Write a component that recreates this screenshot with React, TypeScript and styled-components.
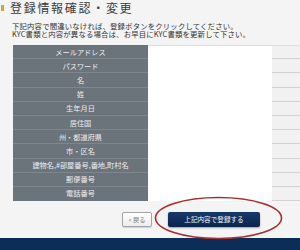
import React from 'react'
import styled, { createGlobalStyle } from 'styled-components'

const Global = createGlobalStyle`
  html, body {
    margin: 0;
    padding: 0;
    background: #f4f4f4;
  }
  body {
    font-family: "Noto Sans CJK JP", "Liberation Sans", sans-serif;
    overflow: hidden;
  }
`

const Page = styled.div`
  width: 300px;
  height: 250px;
  display: flex;
  flex-direction: column;
  background: #f4f4f4;
  overflow: hidden;
`

const Header = styled.div`
  display: flex;
  align-items: center;
  gap: 6px;
  padding: 1px 0 0 1px;
  height: 14px;
`

const Bullet = styled.span`
  width: 3px;
  height: 6px;
  background: #c9a833;
`

const Title = styled.h1`
  margin: 0;
  font-size: 12px;
  line-height: 14px;
  letter-spacing: 1.7px;
  font-weight: 400;
  color: #3c3c3c;
  white-space: nowrap;
`

const Notes = styled.div`
  margin-top: 7px;
  padding-left: 12px;
  font-size: 7.4px;
  line-height: 8.2px;
  letter-spacing: 0.15px;
  color: #333;
  white-space: nowrap;
`

const Table = styled.div`
  margin-top: 6.6px;
  margin-left: 13px;
  display: flex;
  flex-direction: column;
`

const Row = styled.div`
  display: grid;
  grid-template-columns: 135px 124px 1fr;
  height: 14.2px;
`

const Label = styled.div<{ $last?: boolean }>`
  background: #6b737b;
  color: #eceef0;
  font-size: 7.2px;
  display: flex;
  align-items: center;
  justify-content: center;
  border-bottom: 1px solid ${p => (p.$last ? '#6b737b' : '#7f878e')};
  box-sizing: border-box;
  white-space: nowrap;
`

const Value = styled.div<{ $first?: boolean }>`
  background: #ffffff;
  box-sizing: border-box;
  border-top: ${p => (p.$first ? '1px solid #dcdcdc' : 'none')};
`

const Extra = styled.div<{ $first?: boolean }>`
  background: #f1f1f1;
  border-top: ${p => (p.$first ? '1px solid #dcdcdc' : 'none')};
  border-bottom: 1px solid #d2d2d2;
  box-sizing: border-box;
`

const Actions = styled.div`
  position: relative;
  display: flex;
  align-items: center;
  gap: 16px;
  margin-top: 10.8px;
  padding-left: 122px;
  height: 15px;
`

const BackButton = styled.button`
  width: 30px;
  height: 15px;
  padding: 0;
  border: 1px solid #a3a3a3;
  border-radius: 2px;
  background: linear-gradient(#ffffff, #ececec);
  color: #777;
  font-family: inherit;
  font-size: 6.2px;
  box-shadow: 0 1px 1px rgba(0, 0, 0, 0.15);
`

const SubmitButton = styled.button`
  width: 92px;
  height: 15px;
  padding: 0;
  border: none;
  border-radius: 2px;
  background: linear-gradient(#17396a, #0b264d);
  color: #f2f4f8;
  font-family: inherit;
  font-size: 6.6px;
  box-shadow: 0 1px 2px rgba(0, 0, 0, 0.35);
`

const Circle = styled.svg`
  position: absolute;
  left: 154px;
  top: -16px;
  width: 129px;
  height: 44px;
  overflow: visible;
  pointer-events: none;
`

const Footer = styled.div`
  margin-top: auto;
  height: 12px;
  background: #0c2d58;
`

const labels = [
  'メールアドレス',
  'パスワード',
  '名',
  '姓',
  '生年月日',
  '居住国',
  '州・都道府県',
  '市・区名',
  '建物名,#部屋番号,番地,町村名',
  '郵便番号',
  '電話番号',
]

export default function App() {
  return (
    <Page>
      <Global />
      <Header>
        <Bullet />
        <Title>登録情報確認・変更</Title>
      </Header>
      <Notes>
        下記内容で間違いなければ、登録ボタンをクリックしてください。
        <br />
        KYC書類と内容が異なる場合は、お早目にKYC書類を更新して下さい。
      </Notes>
      <Table>
        {labels.map((l, i) => (
          <Row key={l}>
            <Label $last={i === labels.length - 1}>{l}</Label>
            <Value $first={i === 0} />
            <Extra $first={i === 0} />
          </Row>
        ))}
      </Table>
      <Actions>
        <BackButton>« 戻る</BackButton>
        <SubmitButton>上記内容で登録する</SubmitButton>
        <Circle viewBox="0 0 129 44">
          <ellipse cx="64.5" cy="22" rx="63" ry="20.5" fill="none" stroke="#a3302f" strokeWidth="1.6" />
        </Circle>
      </Actions>
      <Footer />
    </Page>
  )
}
